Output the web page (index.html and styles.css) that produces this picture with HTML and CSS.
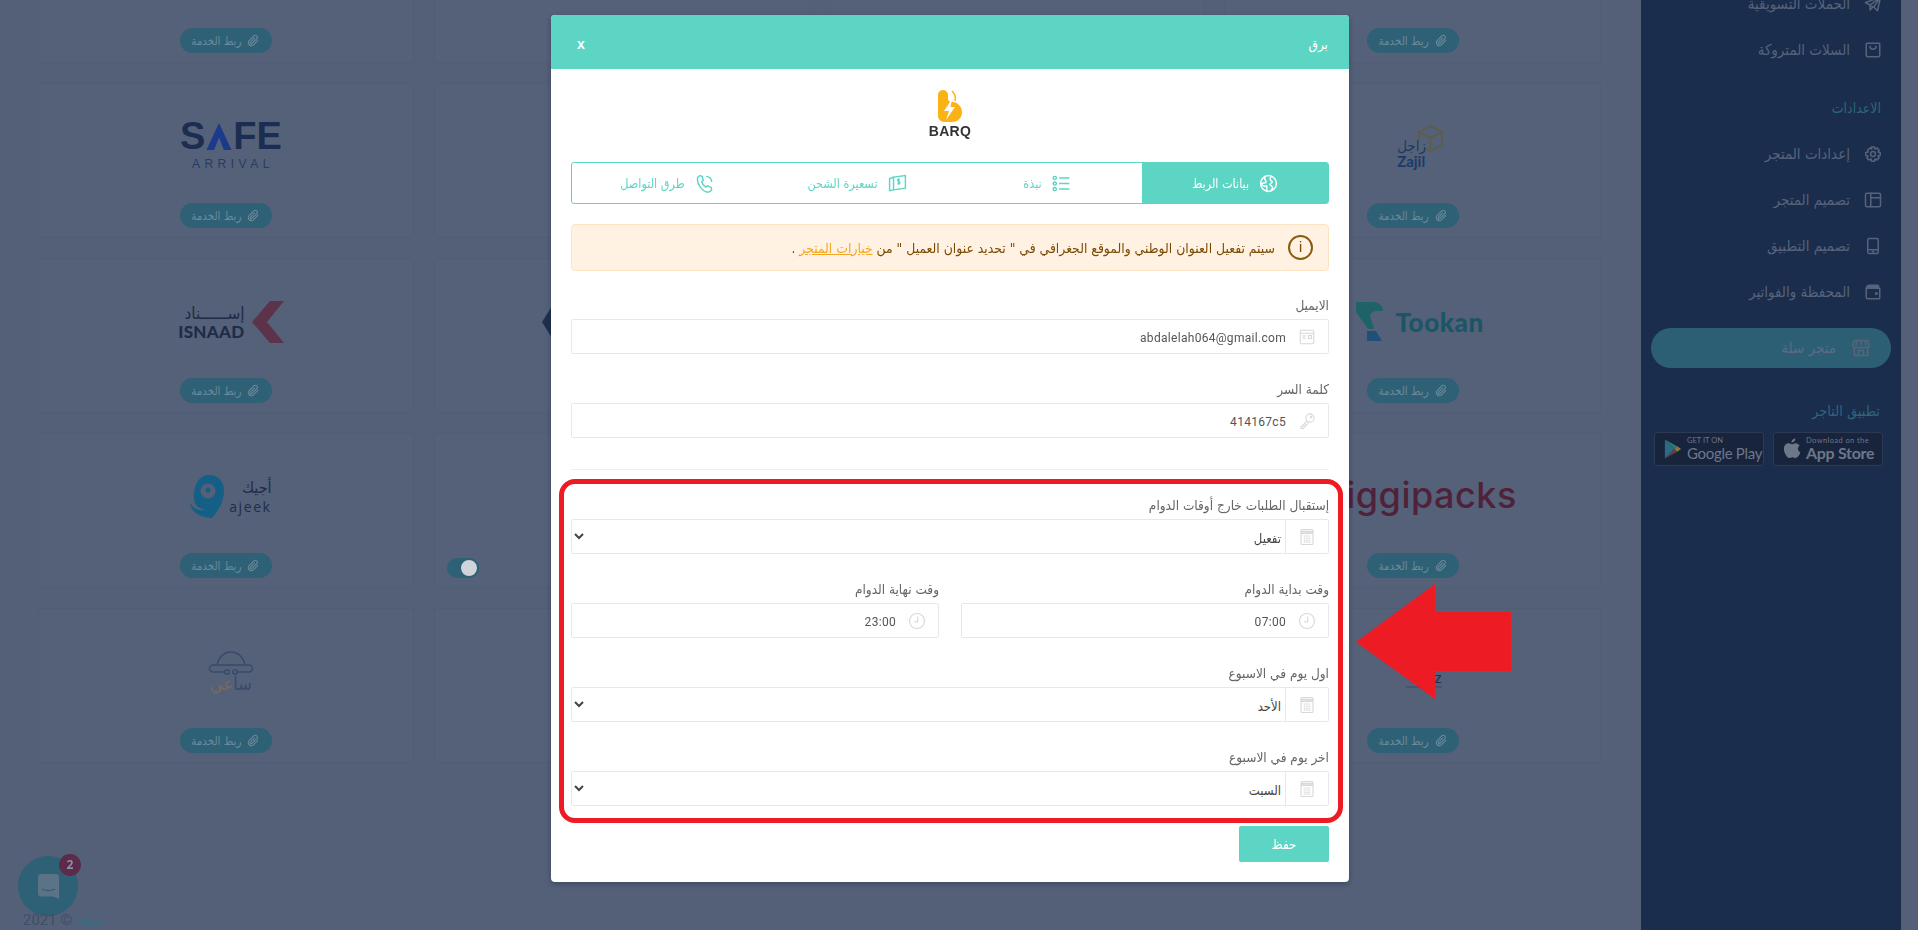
FILE: index.html
```html
<!DOCTYPE html>
<html lang="ar" dir="rtl">
<head>
<meta charset="utf-8">
<title>برق</title>
<link rel="stylesheet" href="styles.css">
</head>
<body>
<svg class="sprite" aria-hidden="true">
  <symbol id="i-clip" viewBox="0 0 24 24"><path d="M20.5 11.5l-8.6 8.6a5.6 5.6 0 0 1-7.9-7.9l8.6-8.6a3.7 3.7 0 0 1 5.3 5.3l-8.6 8.6a1.900 1.900 0 0 1-2.700-2.700l8-7.900"/></symbol>
  <symbol id="i-plane" viewBox="0 0 24 24"><path d="M22 3L2 10l6 3.500L22 3zM22 3l-9 13-3-1M22 3l-4 18-5-5M8 13.500V20l3-3"/></symbol>
  <symbol id="i-bag" viewBox="0 0 24 24"><path d="M4 3h16a1 1 0 0 1 1 1v15a2 2 0 0 1-2 2H5a2 2 0 0 1-2-2V4a1 1 0 0 1 1-1z"/><path d="M8 7a4 4 0 0 0 8 0"/></symbol>
  <symbol id="i-gear" viewBox="0 0 24 24"><circle cx="12" cy="12" r="3.200"/><path d="M10 2.500h4l.7 3 2.600-1.500 2.800 2.800-1.500 2.600 3 .7v3.800l-3 .7 1.500 2.600-2.800 2.800-2.600-1.500-.7 3h-4l-.7-3-2.600 1.500-2.800-2.800 1.500-2.600-3-.7v-3.800l3-.7L4.900 6.800 7.700 4l2.600 1.500z"/></symbol>
  <symbol id="i-layout" viewBox="0 0 24 24"><rect x="2" y="3" width="20" height="18" rx="2"/><path d="M9 3v18M9 9h13"/></symbol>
  <symbol id="i-tablet" viewBox="0 0 24 24"><rect x="5" y="2" width="14" height="20" rx="2"/><path d="M5 17h14M11 19.500h2"/></symbol>
  <symbol id="i-wallet" viewBox="0 0 24 24"><path d="M20 5H5a2 2 0 0 0-2 2v12a2 2 0 0 0 2 2h15a1 1 0 0 0 1-1V8a1 1 0 0 0-1-1H4"/><path d="M4 6c0-2 1-3 3-3h12"/><circle cx="16.500" cy="14" r="1"/></symbol>
  <symbol id="i-store" viewBox="0 0 24 24"><path d="M4 3h16l2 6a3 3 0 0 1-5 1.800 3.500 3.500 0 0 1-5 0 3.500 3.500 0 0 1-5 0A3 3 0 0 1 2 9z"/><path d="M4 12v9h16v-9M7 3l-1 6M17 3l1 6M12 3v6M9 21v-6h6v6"/></symbol>
  <symbol id="i-globe" viewBox="0 0 24 24"><circle cx="12" cy="12" r="10"/><path d="M8 2.800C5 6 9 8 9 10s-3 1-6 2c1 3 4 4 6 3s0 4 1 6.700M16 3c-3 2-2 5 0 6s-1 3-2 4 3 2 3 4-1 2.500-2 4"/></symbol>
  <symbol id="i-list" viewBox="0 0 24 24"><path d="M9 5h13M9 12h13M9 19h13"/><circle cx="3.500" cy="5" r="2"/><circle cx="3.500" cy="12" r="2"/><circle cx="3.500" cy="19" r="2"/></symbol>
  <symbol id="i-bill" viewBox="0 0 24 24"><path d="M2 6l5-2v16l-5 1zM7 4l15-2v16L7 20"/><path d="M15 7c-2-1-3 0-3 1 0 2 3 1 3 3s-2 2-3 1M13.500 5.500v8"/></symbol>
  <symbol id="i-phone" viewBox="0 0 24 24"><path d="M6 2l3 1 1.500 5-2 2c.8 2.500 2.700 5 5 6.500l2.500-1.500 4.500 2 .5 3c-1 2-3 3-5 3C9 22 3 13 3 7c0-2 1-4 3-5zM14 3a7 7 0 0 1 7 7"/></symbol>
  <symbol id="i-card" viewBox="0 0 24 24"><rect x="3" y="3" width="18" height="18" rx="2"/><path d="M3 7h18M6 10.500h4M6 13.500h4"/><rect x="14" y="10" width="4" height="4"/></symbol>
  <symbol id="i-key" viewBox="0 0 24 24"><circle cx="16" cy="8" r="5.500"/><path d="M12 12L4 20v2h3l1-1v-2h2v-2h2l2-3"/><circle cx="17.500" cy="6.500" r="1"/></symbol>
  <symbol id="i-calc" viewBox="0 0 24 24"><rect x="4" y="2" width="16" height="20" rx="1.500"/><path d="M4 4.500h16M4 7h16" stroke-width="2"/><path d="M7 10.500h10M7 13.500h10M7 16.500h10M7 19h10M9 10v10M12 10v10M15 10v10" stroke-width=".7"/></symbol>
  <symbol id="i-clock" viewBox="0 0 24 24"><circle cx="12" cy="12" r="10"/><path d="M13 6v7H8"/></symbol>
</svg>

<div class="app">
  <aside class="sidebar">
    <a class="nav-item"><svg class="nav-icon"><use href="#i-plane"/></svg><span>الحملات التسويقية</span></a>
    <a class="nav-item"><svg class="nav-icon"><use href="#i-bag"/></svg><span>السلات المتروكة</span></a>
    <h4 class="nav-heading">الاعدادات</h4>
    <a class="nav-item"><svg class="nav-icon"><use href="#i-gear"/></svg><span>إعدادات المتجر</span></a>
    <a class="nav-item"><svg class="nav-icon"><use href="#i-layout"/></svg><span>تصميم المتجر</span></a>
    <a class="nav-item"><svg class="nav-icon"><use href="#i-tablet"/></svg><span>تصميم التطبيق</span></a>
    <a class="nav-item"><svg class="nav-icon"><use href="#i-wallet"/></svg><span>المحفظة والفواتير</span></a>
    <a class="store-btn"><svg class="store-icon"><use href="#i-store"/></svg><span>متجر سلة</span></a>
    <h4 class="app-heading">تطبيق التاجر</h4>
    <div class="badges">
      <div class="badge">
        <svg class="badge-icon" viewBox="0 0 20 24"><path class="apple" d="M14 1c.2 2-1.800 4.300-4 4.200C9.800 3 12 1 14 1zM18.500 8.500c-2.500 1.500-2.200 5.500.9 7-.7 2.200-3 6-5 6-1.300 0-2-.9-3.400-.9s-2.300.9-3.400.9C5.500 21.500 2 16 2 12c0-4 2.500-6 5-6 1.500 0 2.700 1 3.600 1s2.300-1.200 4-1.100c1.500.1 3 .8 3.900 2.600z"/></svg>
        <div class="badge-text dark"><small>Download on the</small><b>App Store</b></div>
      </div>
      <div class="badge">
        <svg class="badge-icon" viewBox="0 0 20 24"><path class="gp1" d="M2 2l10 10L2 22z"/><path class="gp2" d="M2 2l13 7-3 3z"/><path class="gp3" d="M2 22l13-7-3-3z"/><path class="gp4" d="M15 9l4 3-4 3-3-3z"/></svg>
        <div class="badge-text"><small>GET IT ON</small><b>Google Play</b></div>
      </div>
    </div>
  </aside>

  <main class="main">
    <section class="cards">
      <article class="card"><div class="logo-box"></div><a class="link-btn"><svg><use href="#i-clip"/></svg>ربط الخدمة</a></article>
      <article class="card"></article>
      <article class="card"></article>
      <article class="card"><div class="logo-box"></div><a class="link-btn"><svg><use href="#i-clip"/></svg>ربط الخدمة</a></article>

      <article class="card">
        <div class="logo-box shift-right">
          <div class="logo-zajil" dir="ltr">
            <svg viewBox="0 0 26 28"><path d="M6 24l7 3 12-6V7L13 1 1 7v9M13 13l12-6M13 13v14M13 13L1 7"/></svg>
            <span class="za-ar">زاجل</span><span class="za-en">Zajil</span>
          </div>
        </div>
        <a class="link-btn"><svg><use href="#i-clip"/></svg>ربط الخدمة</a>
      </article>
      <article class="card"></article>
      <article class="card"></article>
      <article class="card">
        <div class="logo-box">
          <div class="logo-safe" dir="ltr">
            <div class="safe-main">S<svg viewBox="0 0 26 28"><path d="M13 0L26 28H18L13 15 8 28H0z"/></svg>FE</div>
            <div class="safe-sub">ARRIVAL</div>
          </div>
        </div>
        <a class="link-btn"><svg><use href="#i-clip"/></svg>ربط الخدمة</a>
      </article>

      <article class="card">
        <div class="logo-box shift-right">
          <div class="logo-tookan" dir="ltr">
            <svg viewBox="0 0 27 40"><path class="tk1" d="M0 0h17c6 0 10 4 10 9h-6c-3 0-6 2-7 4l4 14H12L0 10z"/><path class="tk2" d="M11 29h9l6 10H11z"/></svg>
            <span>Tookan</span>
          </div>
        </div>
        <a class="link-btn"><svg><use href="#i-clip"/></svg>ربط الخدمة</a>
      </article>
      <article class="card"></article>
      <article class="card"><div class="logo-box col2-logo"><svg class="diamond" viewBox="0 0 20 32"><path d="M10 0l10 16-10 16L0 16z"/></svg></div></article>
      <article class="card">
        <div class="logo-box">
          <div class="logo-isnaad" dir="ltr">
            <div class="isnaad-text"><span class="is-ar">إســــــناد</span><span class="is-en">ISNAAD</span></div>
            <svg viewBox="0 0 32 42"><path d="M18 0h14L15 21l17 21H18L0 21z"/></svg>
          </div>
        </div>
        <a class="link-btn"><svg><use href="#i-clip"/></svg>ربط الخدمة</a>
      </article>

      <article class="card">
        <div class="logo-box shift-right"><div class="logo-diggi" dir="ltr">diggipacks</div></div>
        <a class="link-btn"><svg><use href="#i-clip"/></svg>ربط الخدمة</a>
      </article>
      <article class="card"></article>
      <article class="card toggle-card"><span class="toggle"><span class="knob"></span></span></article>
      <article class="card">
        <div class="logo-box">
          <div class="logo-ajeek" dir="ltr">
            <svg viewBox="0 0 36 44"><path d="M19 0c10 0 15 7 15 16 0 10-5 19-12 27C12 43 1 38 0 28 4 34 10 37 15 34 6 34 3 27 4 18 5 8 10 0 19 0z"/><circle cx="18" cy="16" r="7.500" class="aj-ring"/><circle cx="18" cy="15" r="2.500" class="aj-dot"/></svg>
            <div class="ajeek-text"><span class="aj-ar">أجيك</span><span class="aj-en">ajeek</span></div>
          </div>
        </div>
        <a class="link-btn"><svg><use href="#i-clip"/></svg>ربط الخدمة</a>
      </article>

      <article class="card">
        <div class="logo-box shift-right"><div class="logo-z" dir="ltr">z</div></div>
        <a class="link-btn"><svg><use href="#i-clip"/></svg>ربط الخدمة</a>
      </article>
      <article class="card"></article>
      <article class="card"></article>
      <article class="card">
        <div class="logo-box">
          <div class="logo-saei">
            <svg viewBox="0 0 46 24"><path d="M9 14C11 5 17 1 23 1s12 4 14 13M5 14h36a3 3 0 0 1 0 7H29M17 21H5a3 3 0 0 1 0-7"/><circle cx="19" cy="21" r="2.200"/><circle cx="27" cy="21" r="2.200"/></svg>
            <div class="saei-text"><span class="s1">سا</span><span class="s2">عي</span></div>
          </div>
        </div>
        <a class="link-btn"><svg><use href="#i-clip"/></svg>ربط الخدمة</a>
      </article>
    </section>

    <footer class="copyright"><span class="brand">سلة</span> © <span>2021</span></footer>
  </main>
</div>

<div class="chat">
  <svg viewBox="0 0 21 25"><path d="M3 0h15a3 3 0 0 1 3 3v22l-6-2.500H3a3 3 0 0 1-3-3V3a3 3 0 0 1 3-3z"/><path class="smile" d="M4 15c3.500 2.200 9.500 2.200 13 0"/></svg>
  <span class="chat-badge">2</span>
</div>

<div class="modal-layer">
  <div class="modal">
    <header class="modal-head">
      <span class="modal-title">برق</span>
      <span class="modal-close">x</span>
    </header>
    <div class="modal-body">
      <div class="barq">
        <svg viewBox="0 0 24 32"><path class="barq-b" d="M0 5a5 5 0 0 1 10 0v4c0 1 1 2 2 3 5-1 12 3 12 10 0 6-4 10-10 10H6a6 6 0 0 1-6-6z"/><path class="barq-c" d="M14 1c3 3 4 6 3 10"/><path class="barq-l" d="M14 9L6 21h5l-3 9 9-13h-4.500z"/></svg>
        <span dir="ltr">BARQ</span>
      </div>

      <nav class="tabs">
        <a class="tab active"><svg><use href="#i-globe"/></svg>بيانات الربط</a>
        <a class="tab"><svg><use href="#i-list"/></svg>نبذة</a>
        <a class="tab"><svg><use href="#i-bill"/></svg>تسعيرة الشحن</a>
        <a class="tab"><svg><use href="#i-phone"/></svg>طرق التواصل</a>
      </nav>

      <div class="alert">
        <span class="alert-icon">i</span>
        <p>سيتم تفعيل العنوان الوطني والموقع الجغرافي في " تحديد عنوان العميل " من <a>خيارات المتجر</a> .</p>
      </div>

      <div class="field">
        <label>الايميل</label>
        <div class="control"><svg class="ctl-icon"><use href="#i-card"/></svg><input class="latin" value="abdalelah064@gmail.com"></div>
      </div>
      <div class="field">
        <label>كلمة السر</label>
        <div class="control"><svg class="ctl-icon"><use href="#i-key"/></svg><input class="latin" value="414167c5"></div>
      </div>
      <hr class="sep">
      <div class="field">
        <label>إستقبال الطلبات خارج أوقات الدوام</label>
        <div class="control"><span class="addon"><svg class="ctl-icon"><use href="#i-calc"/></svg></span><select><option>تفعيل</option></select></div>
      </div>
      <div class="field-row">
        <div class="field">
          <label>وقت بداية الدوام</label>
          <div class="control"><svg class="ctl-icon"><use href="#i-clock"/></svg><input class="latin" value="07:00"></div>
        </div>
        <div class="field">
          <label>وقت نهاية الدوام</label>
          <div class="control"><svg class="ctl-icon"><use href="#i-clock"/></svg><input class="latin" value="23:00"></div>
        </div>
      </div>
      <div class="field">
        <label>اول يوم في الاسبوع</label>
        <div class="control"><span class="addon"><svg class="ctl-icon"><use href="#i-calc"/></svg></span><select><option>الأحد</option></select></div>
      </div>
      <div class="field last">
        <label>اخر يوم في الاسبوع</label>
        <div class="control"><span class="addon"><svg class="ctl-icon"><use href="#i-calc"/></svg></span><select><option>السبت</option></select></div>
      </div>
      <button class="save" type="button">حفظ</button>
    </div>
  </div>
</div>

<div class="red-box"></div>
<svg class="red-arrow" viewBox="0 0 155 115"><path d="M0 58L79 0V28H155V87H79V115z"/></svg>
</body>
</html>
```

FILE: styles.css
```css
:root {
  --ar: "DejaVu Sans", "Noto Sans", sans-serif;
  --teal: #5dd5c4;
  --dim-teal: #2e6076;
  --page: #536078;
}
* { box-sizing: border-box; }
html, body { margin: 0; height: 100%; }
body {
  background: var(--page);
  font-family: var(--ar);
  font-stretch: condensed;
  overflow: hidden;
}
.sprite { display: none; }
a { text-decoration: none; }

.app { display: flex; height: 930px; padding-right: 17px; overflow: hidden; }

/* Sidebar */
.sidebar {
  width: 260px;
  flex: none;
  background: #1a2d4d;
  color: #56637b;
  height: 100%;
  overflow: hidden;
}
.nav-item {
  display: flex;
  align-items: center;
  gap: 14px;
  height: 46px;
  padding-right: 19px;
  font-size: 15px;
  color: #56637b;
}
.nav-item:first-child { margin-top: -19px; }
.nav-icon {
  width: 18px; height: 18px; flex: none;
  fill: none; stroke: #56637b; stroke-width: 2; stroke-linejoin: round; stroke-linecap: round;
}
.nav-heading {
  margin: 12px 0 0;
  height: 46px;
  line-height: 46px;
  padding-right: 20px;
  font-size: 14px;
  font-weight: 400;
  color: #2f6678;
}
.store-btn {
  display: flex;
  align-items: center;
  gap: 15px;
  height: 40px;
  margin: 13px 10px 0;
  padding-right: 20px;
  border-radius: 20px;
  background: #2c5f74;
  color: #5b6c83;
  font-size: 15px;
}
.store-icon { width: 20px; height: 20px; fill: none; stroke: #56637b; stroke-width: 2; stroke-linejoin: round; }
.app-heading {
  margin: 31px 0 0;
  height: 24px;
  line-height: 24px;
  padding-right: 21px;
  font-size: 14.500px;
  font-weight: 400;
  color: #2f6678;
}
.badges { display: flex; gap: 9px; margin: 9px 18px 0 0; }
.badge {
  width: 110px; height: 34px;
  display: flex; align-items: center; gap: 5px;
  direction: ltr;
  padding: 0 6px 0 8px;
  background: #18233c;
  border: 1px solid #2c3a55;
  border-radius: 3px;
}
.badge-icon { width: 19px; height: 24px; flex: none; }
.apple { fill: #6d7789; }
.gp1 { fill: #2a6c85; }
.gp2 { fill: #2e7a6a; }
.gp3 { fill: #6d3a4a; }
.gp4 { fill: #8a7a3a; }
.badge-text { display: flex; flex-direction: column; font-family: "Lato", sans-serif; font-stretch: normal; color: #6d7789; line-height: 1; white-space: nowrap; }
.badge-text small { font-size: 7.500px; margin-bottom: 1px; }
.badge-text b { font-size: 15px; font-weight: 400; letter-spacing: -.3px; }
.badge-text.dark small { font-size: 7.500px; letter-spacing: .4px; }
.badge-text.dark b { font-size: 16px; font-weight: 700; }

/* Main grid of services */
.main { flex: 1; min-width: 0; }
.cards {
  display: grid;
  grid-template-columns: repeat(4, 1fr);
  grid-auto-rows: 155px;
  gap: 20px;
  margin-top: -92px;
  padding: 0 40px 0 38px;
}
.card {
  display: flex;
  flex-direction: column;
  align-items: center;
  background: #546179;
  border: 1px solid #505d75;
}
.logo-box {
  align-self: stretch;
  height: 119px;
  flex: none;
  display: flex;
  align-items: center;
  justify-content: center;
  padding: 6px 0 0 10px;
}
.logo-box.shift-right { padding-left: 14px; }
.logo-box.col2-logo { justify-content: flex-end; padding: 6px 0 0 107px; }
.diamond { width: 20px; height: 32px; fill: #1f2f4e; }
.link-btn {
  display: flex;
  align-items: center;
  justify-content: center;
  gap: 6px;
  width: 92px; height: 25px;
  border-radius: 13px;
  background: var(--dim-teal);
  color: #6b8a9a;
  font-size: 11.500px;
}
.link-btn svg { width: 13px; height: 13px; fill: none; stroke: #6b8a9a; stroke-width: 2; }
.toggle-card { align-items: flex-end; justify-content: flex-end; padding: 0 0 9px 12px; }
.toggle {
  display: flex; width: 32px; height: 20px; border-radius: 10px;
  background: var(--dim-teal); justify-content: flex-start; align-items: center;
}
.knob { width: 20px; height: 20px; border-radius: 50%; background: #cfd4da; border: 2px solid var(--dim-teal); }

/* Logos */
.logo-safe { display: flex; flex-direction: column; align-items: center; font-family: "Liberation Sans", sans-serif; font-stretch: normal; color: #1c2d52; }
.safe-main { display: flex; align-items: center; font-size: 38px; font-weight: 700; line-height: 29px; height: 29px; }
.safe-main svg { width: 26px; height: 27px; fill: #1b3a8c; margin: 0 1px; }
.safe-sub { font-size: 12px; letter-spacing: 4.500px; margin: 6px -4px 0 0; line-height: 14px; color: #2a3b66; }
.logo-isnaad { display: flex; align-items: center; gap: 7px; }
.logo-isnaad svg { width: 32px; height: 42px; fill: #5c3348; }
.isnaad-text { display: flex; flex-direction: column; align-items: flex-end; color: #1f2b47; line-height: 1; }
.is-ar { font-size: 17px; line-height: 20px; }
.is-en { font-family: "Lato", sans-serif; font-stretch: normal; font-size: 17px; font-weight: 900; letter-spacing: .3px; }
.logo-ajeek { display: flex; align-items: center; gap: 3px; }
.logo-ajeek svg { width: 36px; height: 44px; fill: #145f86; }
.aj-ring { fill: #536078; }
.logo-ajeek .aj-dot { fill: #145f86; }
.ajeek-text { display: flex; flex-direction: column; align-items: flex-end; color: #1f2d4a; line-height: 1; }
.aj-ar { font-size: 16px; line-height: 20px; }
.aj-en { font-family: "Open Sans", sans-serif; font-stretch: normal; font-size: 14px; letter-spacing: 1.600px; line-height: 17px; }
.logo-saei { display: flex; flex-direction: column; align-items: center; width: 46px; }
.logo-saei svg { width: 46px; height: 24px; fill: none; stroke: #3a4a6a; stroke-width: 1.500; }
.saei-text { display: flex; font-size: 18px; line-height: 18px; white-space: nowrap; }
.s1 { color: #3a4a6a; }
.s2 { color: #7a6a5a; }
.logo-zajil { display: flex; flex-direction: column; width: 46px; height: 44px; position: relative; color: #1d3a66; }
.logo-zajil svg { position: absolute; left: 21px; top: 0; width: 25px; height: 27px; fill: none; stroke: #5c5e48; stroke-width: 2; }
.za-ar { font-size: 15px; line-height: 16px; width: 30px; margin-top: 13px; position: relative; }
.za-en { font-family: "Lato", sans-serif; font-stretch: normal; font-size: 15px; font-weight: 700; line-height: 15px; }
.logo-tookan { display: flex; align-items: center; gap: 12px; color: #1c5566; font-family: "Lato", sans-serif; font-stretch: normal; font-weight: 900; font-size: 26px; letter-spacing: .6px; }
.logo-tookan svg { width: 27px; height: 40px; }
.tk1 { fill: #1f6368; }
.tk2 { fill: #204f78; }
.logo-diggi { font-family: "Inter", sans-serif; font-stretch: normal; font-size: 36px; font-weight: 500; color: #4f2239; letter-spacing: .5px; line-height: 40px; margin-top: -4px; }
.logo-z { align-self: center; width: 36px; text-align: right; font-family: "Lato", sans-serif; font-stretch: normal; font-size: 15px; color: #22304e; border-bottom: 2px solid #465670; line-height: 17px; margin: 14px 0 0 7px; }

.copyright {
  margin-top: 148px;
  padding-left: 23px;
  text-align: left;
  position: relative;
  z-index: 1;
  font-family: "Roboto", var(--ar);
  font-stretch: normal;
  font-size: 15px;
  line-height: 17px;
  color: #404d66;
}
.copyright .brand { color: #2e7484; font-family: var(--ar); font-size: 16px; }

/* Chat bubble */
.chat {
  position: fixed;
  left: 18px; top: 856px;
  width: 60px; height: 60px;
  border-radius: 50%;
  background: var(--dim-teal);
  display: flex; align-items: center; justify-content: center;
}
.chat svg { width: 21px; height: 25px; fill: #5c7286; }
.chat .smile { fill: none; stroke: #2e6076; stroke-width: 1.200; }
.chat-badge {
  position: absolute;
  left: 41px; top: -2px;
  width: 22px; height: 22px;
  border-radius: 50%;
  background: #5d2b4a;
  color: #8b8fa8;
  font: 700 12px/22px "Open Sans", sans-serif;
  text-align: center;
}

/* Modal */
.modal-layer {
  position: fixed;
  left: 0; top: 0;
  width: 1900px; height: 930px;
  display: flex;
  justify-content: center;
  padding-top: 15px;
}
.modal {
  width: 798px; height: 867px;
  background: #fff;
  border-radius: 4px;
  box-shadow: 0 2px 5px rgba(20, 30, 50, .35);
  overflow: hidden;
}
.modal-head {
  display: flex;
  justify-content: space-between;
  align-items: center;
  height: 54px;
  padding: 3px 21px 0 26px;
  background: var(--teal);
  color: #fff;
}
.modal-title { font-size: 13.500px; }
.modal-close { font: 700 14px "Liberation Sans", sans-serif; }
.modal-body { padding: 0 20px; }
.barq {
  height: 93px;
  display: flex; flex-direction: column; align-items: center;
  padding-top: 21px;
  font: 700 14px/13px "Liberation Sans", sans-serif;
  color: #333;
  letter-spacing: .3px;
  gap: 3px;
}
.barq svg { width: 24px; height: 32px; flex: none; }
.barq-b { fill: #fbb216; }
.barq-c { fill: none; stroke: #fbb216; stroke-width: 1.500; }
.barq-l { fill: #fff; }
.tabs {
  display: flex;
  height: 42px;
  border: 1.500px solid var(--teal);
  border-radius: 3px;
}
.tab {
  flex: 1;
  display: flex; align-items: center; justify-content: center; gap: 10px;
  color: var(--teal);
  font-size: 12.500px;
}
.tab svg { width: 19px; height: 19px; fill: none; stroke: var(--teal); stroke-width: 1.800; }
.tab.active { flex: 0 0 186px; background: var(--teal); color: #fff; }
.tab.active svg { stroke: #fff; }
.alert {
  display: flex; align-items: center; gap: 13px;
  height: 47px;
  margin-top: 20px;
  padding: 0 15px;
  background: #fff2e2;
  border: 1px solid #fde3c2;
  border-radius: 4px;
  color: #7c4a03;
}
.alert-icon {
  width: 25px; height: 25px; flex: none;
  border: 2px solid #8a5a10;
  border-radius: 50%;
  text-align: center;
  font: 400 15px/21px "Roboto", sans-serif;
}
.alert p { margin: 0; font-size: 13.800px; }
.alert a { color: #f5a623; text-decoration: underline; }

.field { margin-bottom: 25px; }
.alert + .field { margin-top: 24px; }
.field label { display: block; height: 24px; line-height: 20px; font-size: 13.500px; color: #666; }
.field.last { margin-bottom: 20px; }
.control {
  display: flex; align-items: center;
  height: 35px;
  border: 1px solid #e8e8e8;
  border-radius: 2px;
  background: #fff;
}
.ctl-icon { width: 18px; height: 18px; flex: none; margin: 0 12px; fill: none; stroke: #d8d8d8; stroke-width: 1.500; }
.control input, .control select {
  flex: 1; min-width: 0; height: 100%;
  border: 0; outline: 0; background: #fff;
  color: #555;
  font-family: var(--ar); font-stretch: condensed; font-size: 13px;
  padding: 3px 0 0;
}
.control select { color: #444; }
.control input.latin { font-family: "Roboto", sans-serif; font-stretch: normal; font-size: 12px; letter-spacing: .3px; }
.addon { display: flex; align-self: stretch; align-items: center; border-left: 1px solid #e8e8e8; }
.sep { margin: 31px 0 25px; border: 0; border-top: 1px solid #eee; }
.field-row { display: flex; gap: 22px; }
.field-row .field { flex: 1; }
.save {
  display: block;
  width: 90px; height: 36px;
  border: 0; border-radius: 2px;
  background: var(--teal);
  color: #fff;
  font-family: var(--ar); font-stretch: condensed; font-size: 13.500px;
}

/* Annotation */
.red-box {
  position: fixed;
  left: 559px; top: 479px;
  width: 784px; height: 344px;
  border: 5px solid #ed1c24;
  border-radius: 16px;
}
.red-arrow {
  position: fixed;
  left: 1356px; top: 584px;
  width: 155px; height: 115px;
  fill: #ed1c24;
}
```
